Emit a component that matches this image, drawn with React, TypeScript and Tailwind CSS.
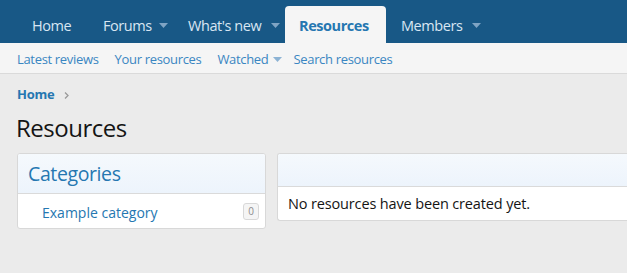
import { ReactNode } from 'react';

const font = { fontFamily: '"Open Sans", "Noto Sans", Arial, sans-serif' };

function Caret({ className }: { className: string }) {
  return (
    <svg width="9" height="5" viewBox="0 0 9 5" className={`shrink-0 ${className}`}>
      <path d="M0 0h9L4.5 5z" fill="currentColor" />
    </svg>
  );
}

type Tab = { label: string; width: string; menu?: boolean; active?: boolean };

const tabs: Tab[] = [
  { label: 'Home', width: 'w-[71px]' },
  { label: 'Forums', width: 'w-[85px]', menu: true },
  { label: "What's new", width: 'w-[112px]', menu: true },
  { label: 'Resources', width: 'w-[101px]', active: true },
  { label: 'Members', width: 'w-[100px]', menu: true },
];

function NavTab({ tab }: { tab: Tab }) {
  if (tab.active) {
    return (
      <div className={`${tab.width} mt-[6px] flex h-[37px] items-center rounded-t-[4px] bg-[#f5f5f5] pt-[2px] pl-[14px] text-[14.5px] font-bold tracking-[-0.03em] text-[#2577b1]`}>
        {tab.label}
      </div>
    );
  }
  return (
    <div className={`${tab.width} flex h-[43px] items-center justify-between pt-[8px] pl-[15px] pr-[5px] text-[14.5px] tracking-[-0.03em] text-[#d8e6f3]`}>
      <span className="whitespace-nowrap">{tab.label}</span>
      {tab.menu ? <Caret className="text-[#7fa4c4]" /> : null}
    </div>
  );
}

function SubLink({ children, className = 'mr-[16px]' }: { children: ReactNode; className?: string }) {
  return (
    <span className={`flex items-center whitespace-nowrap text-[13px] leading-none tracking-[-0.025em] text-[#3a86c2] ${className}`}>
      {children}
    </span>
  );
}

export default function App() {
  return (
    <div style={font} className="min-h-[273px] w-full overflow-hidden bg-[#ebebeb]">
      <nav className="flex h-[43px] bg-[#185886] pl-[17px]">
        {tabs.map(t => (
          <NavTab key={t.label} tab={t} />
        ))}
      </nav>

      <div className="flex h-[31px] items-center border-b border-[#dadada] bg-[#f5f5f5] pl-[17px] pt-[3px]">
        <SubLink>Latest reviews</SubLink>
        <SubLink>Your resources</SubLink>
        <SubLink className="mr-[11px] gap-[5px]">
          Watched
          <Caret className="text-[#8db3d4]" />
        </SubLink>
        <SubLink className="">Search resources</SubLink>
      </div>

      <div className="mt-[12px] flex h-[18px] items-center pl-[17px] text-[13px]">
        <span className="font-bold tracking-[-0.02em] text-[#2577b1]">Home</span>
        <svg width="5" height="7" viewBox="0 0 5 7" className="ml-[10px]">
          <path d="M1 0.5L4 3.5L1 6.5" fill="none" stroke="#9a9a9a" strokeWidth="1.3" />
        </svg>
      </div>

      <h1 className="mt-[9px] h-[30px] pl-[16px] text-[24px] leading-[30px] tracking-[-0.02em] text-[#141414]">Resources</h1>

      <div className="mt-[10px] flex items-start pl-[17px]">
        <div className="w-[249px] shrink-0 overflow-hidden rounded-[3px] border border-[#d8d8d8] bg-white">
          <div className="flex h-[40px] items-center border-b border-[#dadada] bg-gradient-to-b from-[#f5f9fd] to-[#edf4fc] pt-[1px] pl-[10px] text-[19.5px] tracking-[-0.02em] text-[#2577b1]">
            Categories
          </div>
          <div className="flex h-[34px] items-center justify-between pl-[24px] pr-[6px]">
            <span className="pt-[3px] text-[14px] text-[#2577b1]">Example category</span>
            <span className="flex h-[17px] w-[16px] items-center justify-center rounded-[3px] border border-[#d8d8d8] bg-[#f5f5f5] text-[10px] text-[#8c8c8c]">
              0
            </span>
          </div>
        </div>

        <div className="ml-[11px] flex-1 overflow-hidden rounded-l-[3px] border border-r-0 border-[#d8d8d8] bg-white">
          <div className="h-[33px] border-b border-[#dadada] bg-gradient-to-b from-[#f5f9fd] to-[#edf4fc]" />
          <div className="flex h-[33px] items-center pt-[1px] pl-[10px] text-[14.5px] tracking-[-0.01em] text-[#141414]">
            No resources have been created yet.
          </div>
        </div>
      </div>
    </div>
  );
}
